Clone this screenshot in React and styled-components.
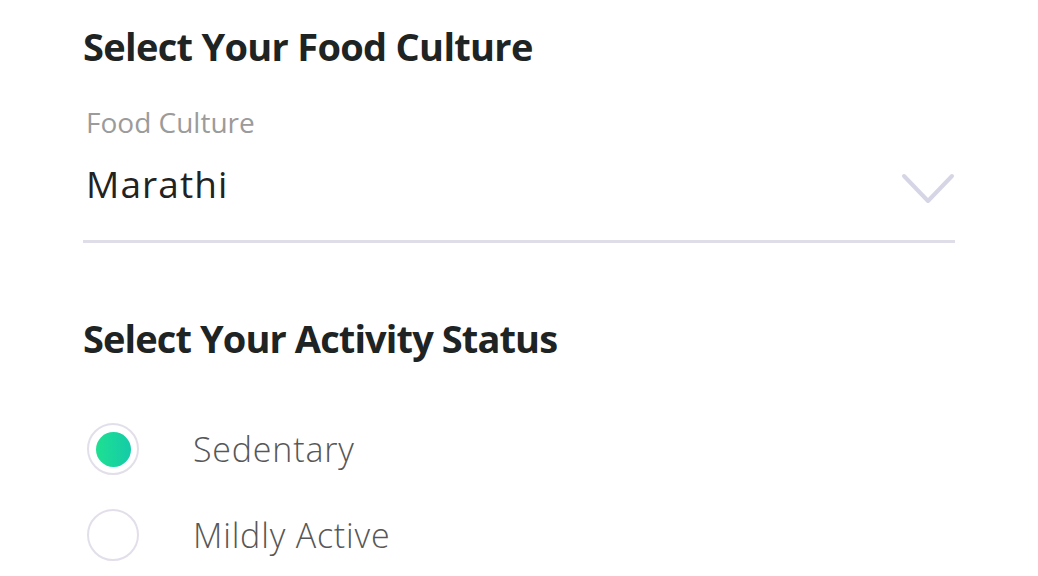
import React, { useState } from "react";
import styled, { createGlobalStyle } from "styled-components";

const Global = createGlobalStyle`
  html, body { margin: 0; padding: 0; background: #ffffff; }
  body { font-family: "Open Sans", "Noto Sans", sans-serif; }
`;

const Page = styled.div`
  width: 1038px;
  height: 576px;
  overflow: hidden;
  box-sizing: border-box;
  padding: 22px 83px 0 83px;
  background: #ffffff;
`;

const Heading = styled.h2`
  margin: 0;
  font-size: 38px;
  font-weight: 700;
  color: #1e2323;
  line-height: 48px;
  letter-spacing: ${(p) => (p.$tight ? "-0.9px" : "-0.7px")};
`;

const Field = styled.div`
  margin-top: 34px;
  width: 872px;
`;

const Label = styled.div`
  font-size: 28px;
  color: #9b9b9b;
  line-height: 36px;
  padding-left: 3px;
`;

const SelectRow = styled.div`
  display: flex;
  align-items: center;
  justify-content: space-between;
  margin-top: 22px;
  padding-left: 3px;
  padding-bottom: 34px;
  border-bottom: 3px solid #dedde8;
`;

const Value = styled.span`
  font-size: 37px;
  color: #222222;
  line-height: 44px;
  letter-spacing: 1.1px;
`;

const ChevronBox = styled.span`
  display: flex;
  margin-top: 10px;
`;

const Section = styled.div`
  margin-top: 71px;
`;

const Options = styled.div`
  display: flex;
  flex-direction: column;
  gap: 34px;
  margin-top: 61px;
`;

const Option = styled.label`
  display: flex;
  align-items: center;
  gap: 54px;
  cursor: pointer;
`;

const Radio = styled.span`
  box-sizing: border-box;
  width: 52px;
  height: 52px;
  margin-left: 4px;
  border-radius: 50%;
  border: 2px solid #e3dfea;
  display: flex;
  align-items: center;
  justify-content: center;
  flex: none;
`;

const Dot = styled.span`
  width: 35px;
  height: 35px;
  border-radius: 50%;
  background: linear-gradient(90deg, #1ee092, #14cba8);
`;

const OptionText = styled.span`
  font-size: 34px;
  color: #575757;
  font-weight: 300;
  line-height: 52px;
  letter-spacing: 0.8px;
`;

const Chevron = () => (
  <svg width="54" height="32" viewBox="0 0 54 32" fill="none">
    <path d="M3 3 L27 28 L51 3" stroke="#d6d5e6" strokeWidth="4" strokeLinecap="round" strokeLinejoin="round" />
  </svg>
);

export default function App() {
  const [sel, setSel] = useState(0);
  const opts = ["Sedentary", "Mildly Active"];
  return (
    <Page>
      <Global />
      <Heading>Select Your Food Culture</Heading>
      <Field>
        <Label>Food Culture</Label>
        <SelectRow>
          <Value>Marathi</Value>
          <ChevronBox>
            <Chevron />
          </ChevronBox>
        </SelectRow>
      </Field>
      <Section>
        <Heading $tight>Select Your Activity Status</Heading>
        <Options>
          {opts.map((o, i) => (
            <Option key={o} onClick={() => setSel(i)}>
              <Radio>{sel === i && <Dot />}</Radio>
              <OptionText>{o}</OptionText>
            </Option>
          ))}
        </Options>
      </Section>
    </Page>
  );
}
